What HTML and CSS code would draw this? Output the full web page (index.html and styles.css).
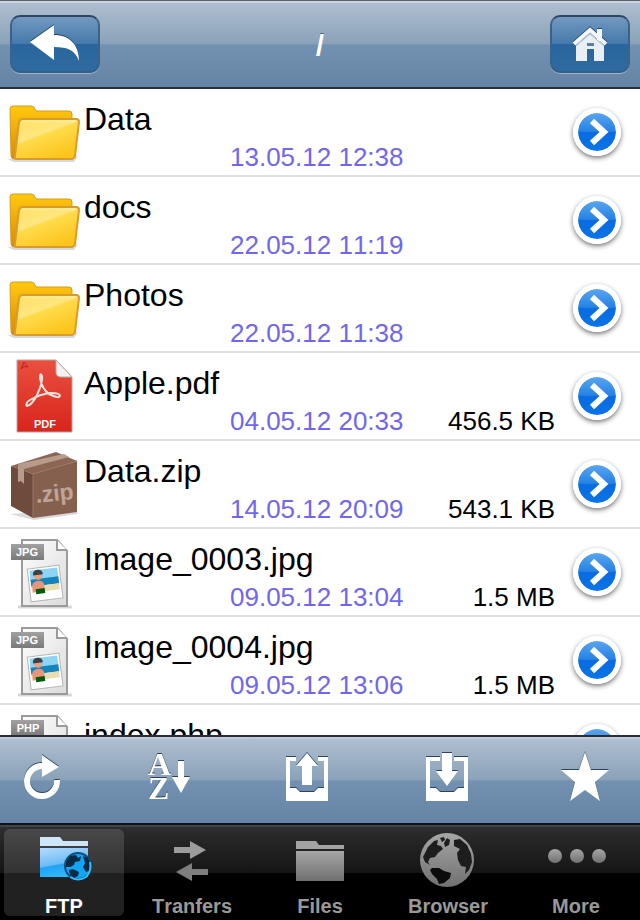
FILE: index.html
```html
<!DOCTYPE html>
<html lang="en">
<head>
    <meta charset="UTF-8">
    <meta name="viewport" content="width=device-width, initial-scale=1.0">
    <title>FTP</title>
    <link rel="stylesheet" href="styles.css">
</head>
<body>
    <svg class="sprite" aria-hidden="true">
        <defs>
            <linearGradient id="folderBack" x1="0" y1="0" x2="0" y2="1">
                <stop offset="0" stop-color="#ffc90e"/>
                <stop offset="1" stop-color="#d98a08"/>
            </linearGradient>
            <linearGradient id="folderFront" x1="0" y1="0" x2="0.6" y2="1">
                <stop offset="0" stop-color="#ffdf62"/>
                <stop offset="0.45" stop-color="#ffe680"/>
                <stop offset="0.5" stop-color="#ffdb4a"/>
                <stop offset="1" stop-color="#fdc51c"/>
            </linearGradient>
            <linearGradient id="pdfRed" x1="0" y1="0" x2="0" y2="1">
                <stop offset="0" stop-color="#e8503f"/>
                <stop offset="1" stop-color="#d9251c"/>
            </linearGradient>
            <linearGradient id="paper" x1="0" y1="0" x2="1" y2="1">
                <stop offset="0" stop-color="#fdfdfd"/>
                <stop offset="1" stop-color="#dcdcdc"/>
            </linearGradient>
            <linearGradient id="badge" x1="0" y1="0" x2="0" y2="1">
                <stop offset="0" stop-color="#a2a2a2"/>
                <stop offset="1" stop-color="#7a7a7a"/>
            </linearGradient>
            <linearGradient id="tabGray" x1="0" y1="0" x2="0" y2="1">
                <stop offset="0" stop-color="#a6a6a6"/>
                <stop offset="1" stop-color="#707070"/>
            </linearGradient>
            <linearGradient id="tabBlue" x1="0" y1="0" x2="0.3" y2="1">
                <stop offset="0" stop-color="#b4dcfb"/>
                <stop offset="0.6" stop-color="#6dbcf6"/>
                <stop offset="0.65" stop-color="#22a2f2"/>
                <stop offset="1" stop-color="#2cb8fb"/>
            </linearGradient>
        </defs>

        <symbol id="folder" viewBox="0 0 80 86">
            <path d="M7 70 L14 73 H74 L78 67 Z" fill="#000" opacity="0.15"/>
            <path d="M10 20 Q10 17 13 17 H31 Q34 17 35 20 L36 22 H69 Q72 22 72 25 V40 L68 70 H14 Q11 70 11 66 Z" fill="url(#folderBack)" stroke="#d99a1c"/>
            <path d="M23 30 H76 Q79 30 79 33 L75 67 Q74 70 71 70 H17 Q14 70 15 67 L19 33 Q20 30 23 30 Z" fill="url(#folderFront)" stroke="#dd9a26" stroke-width="2"/>
            <path d="M22 32 H76" stroke="#fff3b0" stroke-width="1"/>
        </symbol>

        <symbol id="page" viewBox="0 0 80 86">
            <path d="M18 78 H72" stroke="#000" stroke-width="3" opacity="0.15"/>
            <path d="M22 11 H57 L67 22 V77 H22 Z" fill="url(#paper)" stroke="#9b9b9b" stroke-width="2"/>
            <path d="M57 11 V21 H67" fill="#fff" stroke="#9b9b9b" stroke-width="2"/>
            <rect x="11" y="15" width="33" height="16" fill="url(#badge)"/>
        </symbol>

        <symbol id="photo" viewBox="0 0 80 86">
            <g transform="rotate(-7 45 54)">
                <rect x="29" y="38" width="32" height="33" fill="#fff" stroke="#b5b5b5"/>
                <rect x="31" y="40" width="28" height="11" fill="#8ed4f5"/>
                <rect x="31" y="49" width="28" height="7" fill="#1683bd"/>
                <rect x="31" y="56" width="28" height="6" fill="#e6ddb4"/>
                <path d="M32 62 V55 Q33 51 38 51 Q43 51 44 55 V62 Z" fill="#e8967a"/>
                <rect x="35" y="59" width="9" height="5" fill="#075a0c"/>
                <circle cx="39" cy="46" r="4" fill="#e8a184"/>
                <path d="M34 45 Q34 40 39 40 Q44 40 44 45 Z" fill="#3e4245"/>
            </g>
        </symbol>

        <symbol id="chevron" viewBox="0 0 38 38">
            <path d="M14 8 L26 19 L14 30" fill="none" stroke="#fff" stroke-width="6"/>
        </symbol>
    </svg>

    <header class="navbar">
        <button type="button" class="nav-btn back" aria-label="Back">
            <svg width="50" height="40" viewBox="0 0 50 40">
                <path d="M0 18 L24 1 V11 C40 11 49 21 49 37 C45 26 38 23 24 23 V36 Z" fill="#fff"/>
            </svg>
        </button>
        <h1>/</h1>
        <button type="button" class="nav-btn home" aria-label="Home">
            <svg width="36" height="36" viewBox="0 0 36 36">
                <path d="M4 19 L18 7 L32 19 V35 H22 V23 H15 V35 H4 Z" fill="#e9eff5"/>
                <rect x="25" y="3" width="5" height="12" fill="#f4f7fa"/>
                <path d="M2 18 L18 4 L34 18" fill="none" stroke="#f4f7fa" stroke-width="4"/>
                <path d="M4 20 L18 8 L32 20" fill="none" stroke="#a9bdd2" stroke-width="1"/>
                <rect x="15" y="17" width="7" height="3" fill="#5580ab"/>
            </svg>
        </button>
    </header>

    <main class="files">
        <ul>
            <li>
                <svg class="file-icon" viewBox="0 0 80 86"><use href="#folder"/></svg>
                <div class="file-info">
                    <div class="name">Data</div>
                    <div class="meta"><span class="date">13.05.12 12:38</span></div>
                </div>
                <button type="button" class="detail" aria-label="Data details"><svg><use href="#chevron"/></svg></button>
            </li>
            <li>
                <svg class="file-icon" viewBox="0 0 80 86"><use href="#folder"/></svg>
                <div class="file-info">
                    <div class="name">docs</div>
                    <div class="meta"><span class="date">22.05.12 11:19</span></div>
                </div>
                <button type="button" class="detail" aria-label="docs details"><svg><use href="#chevron"/></svg></button>
            </li>
            <li>
                <svg class="file-icon" viewBox="0 0 80 86"><use href="#folder"/></svg>
                <div class="file-info">
                    <div class="name">Photos</div>
                    <div class="meta"><span class="date">22.05.12 11:38</span></div>
                </div>
                <button type="button" class="detail" aria-label="Photos details"><svg><use href="#chevron"/></svg></button>
            </li>
            <li>
                <svg class="file-icon" viewBox="0 0 80 86">
                    <path d="M17 7 H56 L72 24 V79 H17 Z" fill="url(#pdfRed)" stroke="#b9a5a2"/>
                    <path d="M56 7 L72 24 H61 Q56 24 56 19 Z" fill="#f4f1f0" stroke="#b8aaa8"/>
                    <path d="M21 16 L24 9 L28 14 Q24 12 21 16" fill="none" stroke="#b81f17"/>
                    <path d="M27 53 Q32 52 37 42 Q43 29 42 23 Q40 19 40 25 Q42 36 49 41 Q59 46 60 43 Q60 40 51 40 Q40 41 30 47 Q25 50 27 53 Z" fill="none" stroke="#ffe1dc" stroke-width="2"/>
                    <text x="45" y="75" text-anchor="middle" font-size="11" font-weight="bold" fill="#fff">PDF</text>
                </svg>
                <div class="file-info">
                    <div class="name">Apple.pdf</div>
                    <div class="meta"><span class="date">04.05.12 20:33</span><span>456.5 KB</span></div>
                </div>
                <button type="button" class="detail" aria-label="Apple.pdf details"><svg><use href="#chevron"/></svg></button>
            </li>
            <li>
                <svg class="file-icon" viewBox="0 0 80 86">
                    <path d="M10 73 L34 79 L78 73 L76 69 Z" fill="#000" opacity="0.15"/>
                    <path d="M11 25 L56 11 L77 20 L33 33 Z" fill="#8c6553"/>
                    <path d="M11 25 L33 33 V77 L11 65 Z" fill="#6f4b3d"/>
                    <path d="M33 33 L77 20 V71 L33 77 Z" fill="#85604f"/>
                    <path d="M18 23 L64 13 L69 16 L24 28 Z" fill="#b79c8e"/>
                    <path d="M18 23 L24 28 V43 L21 40 L18 41 Z" fill="#b79c8e"/>
                    <path d="M33 33 V77 M33 33 L77 20" stroke="#9b7766" fill="none"/>
                    <text x="55" y="60" text-anchor="middle" font-size="23" font-weight="bold" fill="#bfa597" transform="rotate(-6 55 58)">.zip</text>
                </svg>
                <div class="file-info">
                    <div class="name">Data.zip</div>
                    <div class="meta"><span class="date">14.05.12 20:09</span><span>543.1 KB</span></div>
                </div>
                <button type="button" class="detail" aria-label="Data.zip details"><svg><use href="#chevron"/></svg></button>
            </li>
            <li>
                <svg class="file-icon" viewBox="0 0 80 86">
                    <use href="#page"/>
                    <use href="#photo"/>
                    <text x="27" y="27" text-anchor="middle" font-size="11" font-weight="bold" fill="#fff">JPG</text>
                </svg>
                <div class="file-info">
                    <div class="name">Image_0003.jpg</div>
                    <div class="meta"><span class="date">09.05.12 13:04</span><span>1.5 MB</span></div>
                </div>
                <button type="button" class="detail" aria-label="Image_0003.jpg details"><svg><use href="#chevron"/></svg></button>
            </li>
            <li>
                <svg class="file-icon" viewBox="0 0 80 86">
                    <use href="#page"/>
                    <use href="#photo"/>
                    <text x="27" y="27" text-anchor="middle" font-size="11" font-weight="bold" fill="#fff">JPG</text>
                </svg>
                <div class="file-info">
                    <div class="name">Image_0004.jpg</div>
                    <div class="meta"><span class="date">09.05.12 13:06</span><span>1.5 MB</span></div>
                </div>
                <button type="button" class="detail" aria-label="Image_0004.jpg details"><svg><use href="#chevron"/></svg></button>
            </li>
            <li>
                <svg class="file-icon" viewBox="0 0 80 86">
                    <use href="#page"/>
                    <text x="28" y="27" text-anchor="middle" font-size="11" font-weight="bold" fill="#fff">PHP</text>
                </svg>
                <div class="file-info">
                    <div class="name">index.php</div>
                </div>
                <button type="button" class="detail" aria-label="index.php details"><svg><use href="#chevron"/></svg></button>
            </li>
        </ul>
    </main>

    <div class="toolbar">
        <button type="button" aria-label="Refresh">
            <svg width="36" height="50" viewBox="0 0 36 50">
                <path d="M18 15 A15 15 0 1 0 33 29" fill="none" stroke="#fff" stroke-width="6"/>
                <path d="M18 4 L35 16 L18 26 Z" fill="#fff"/>
            </svg>
        </button>
        <button type="button" aria-label="Sort">
            <svg width="42" height="50" viewBox="0 0 42 50">
                <text class="serif" x="0" y="24" font-size="32" font-weight="bold" fill="#fff">A</text>
                <text class="serif" x="0" y="48" font-size="32" font-weight="bold" fill="#fff">Z</text>
                <path d="M30 10 H36 V26 H42 L33 42 L24 26 H30 Z" fill="#fff"/>
            </svg>
        </button>
        <button type="button" aria-label="Upload">
            <svg width="42" height="50" viewBox="0 0 42 50">
                <path d="M0 6 H10 V10 H4 V37 H10 L14 41 H28 L32 37 H38 V10 H32 V6 H42 V50 H0 Z" fill="#fff"/>
                <path d="M21 2 L32 15 H26 V34 H16 V15 H10 Z" fill="#fff"/>
            </svg>
        </button>
        <button type="button" aria-label="Download">
            <svg width="42" height="50" viewBox="0 0 42 50">
                <path d="M0 6 H14 V10 H4 V37 H10 L14 41 H28 L32 37 H38 V10 H28 V6 H42 V50 H0 Z" fill="#fff"/>
                <path d="M16 2 H26 V20 H32 L21 35 L10 20 H16 Z" fill="#fff"/>
            </svg>
        </button>
        <button type="button" aria-label="Favorites">
            <svg width="50" height="50" viewBox="0 0 50 50">
                <path d="M25 1 L31 19 H49 L35 31 L40 50 L25 39 L10 50 L15 31 L1 19 H19 Z" fill="#fff"/>
            </svg>
        </button>
    </div>

    <nav class="tabbar">
        <a href="#" class="tab active">
            <svg viewBox="0 0 64 67">
                <path d="M8 8 H28 L31 12 H56 V17 H8 Z" fill="#cfe5f8"/>
                <rect x="8" y="19" width="48" height="29" fill="url(#tabBlue)"/>
                <circle cx="46" cy="37" r="13" fill="#12a5f6" stroke="#0c4e7c" stroke-width="2"/>
                <path d="M34 33 L38 27 L44 26 L46 29 L49 27 L48 32 L43 33 L42 36 L38 38 L34 38 Z" fill="#082a44"/>
                <path d="M37 41 L41 40 L47 43 L46 47 L42 49 L38 46 Z" fill="#082a44"/>
                <path d="M51 27 L56 29 L59 36 L57 42 L54 43 L51 38 L53 34 Z" fill="#082a44"/>
                <path d="M38 48 Q46 53 54 48 Q60 42 58 33" fill="none" stroke="#2cc0ff" stroke-width="2"/>
            </svg>
            <span>FTP</span>
        </a>
        <a href="#" class="tab">
            <svg viewBox="0 0 64 67">
                <path d="M14 18 H30 V12 L46 21 L30 30 V24 H14 Z" fill="#9c9c9c"/>
                <path d="M48 40 H32 V34 L16 43 L32 52 V46 H48 Z" fill="#7e7e7e"/>
            </svg>
            <span>Tranfers</span>
        </a>
        <a href="#" class="tab">
            <svg viewBox="0 0 64 67">
                <path d="M8 12 H28 L31 16 H56 V20 H8 Z" fill="#a3a3a3"/>
                <rect x="8" y="22" width="48" height="30" fill="url(#tabGray)"/>
            </svg>
            <span>Files</span>
        </a>
        <a href="#" class="tab">
            <svg viewBox="0 0 64 67">
                <circle cx="31" cy="31" r="27" fill="url(#tabGray)"/>
                <path d="M9 24 L12 18 L18 12 L22 11 L21 16 L25 17 L27 20 L22 24 L19 28 L14 29 L12 33 L14 36 L9 33 L7 28 Z" fill="#1d1d1d"/>
                <path d="M16 39 L23 39 L28 42 L35 44 L34 49 L28 54 L23 55 L21 50 L16 45 L14 41 Z" fill="#0b0b0b"/>
                <path d="M38 11 L44 10 L51 16 L55 25 L56 33 L53 41 L49 45 L50 38 L45 37 L42 31 L41 24 L44 20 L38 17 Z" fill="#1d1d1d"/>
                <path d="M24 9 L28 8 L29 11 L26 13 Z M31 9 L34 11 L33 16 L29 18 L28 14 Z" fill="#1d1d1d"/>
            </svg>
            <span>Browser</span>
        </a>
        <a href="#" class="tab">
            <svg viewBox="0 0 64 67">
                <circle cx="11" cy="27" r="7" fill="url(#tabGray)"/>
                <circle cx="33" cy="27" r="7" fill="url(#tabGray)"/>
                <circle cx="55" cy="27" r="7" fill="url(#tabGray)"/>
            </svg>
            <span>More</span>
        </a>
    </nav>
</body>
</html>
```
FILE: styles.css
```css
* {
    box-sizing: border-box;
}
body {
    font-family: "Liberation Sans", Arial, Helvetica, sans-serif;
    font-kerning: none;
    background-color: #fff;
    color: #000;
    display: flex;
    flex-direction: column;
    height: 100vh;
    margin: 0;
}
button {
    padding: 0;
    border: none;
    background: none;
    cursor: pointer;
}
svg {
    display: block;
}
.sprite {
    position: absolute;
    width: 0;
    height: 0;
}
.serif {
    font-family: "Liberation Serif", "Times New Roman", serif;
}

/* top bar */
.navbar {
    display: grid;
    grid-template-columns: 1fr auto 1fr;
    align-items: center;
    flex-shrink: 0;
    height: 89px;
    padding: 0 10px;
    border-top: 1px solid #5b6169;
    border-bottom: 2px solid #25303f;
    background: linear-gradient(#b0bfd0, #8aa2b9 50%, #7391b1 51%, #6584a5);
    box-shadow: inset 0 2px 0 #c9d3df;
}
.navbar h1 {
    margin: 0;
    padding-top: 4px;
    font-size: 30px;
    line-height: 32px;
    color: #fff;
    text-shadow: 0 -1px 0 #4f657d;
}
.nav-btn {
    display: flex;
    justify-content: center;
    align-items: center;
    height: 58px;
    border: 2px solid #2f4f70;
    border-color: #2b4764 #3b6288 #32608d;
    border-radius: 10px;
    background: linear-gradient(#7398c0, #447aab 50%, #29669d 51%, #2f6ba1);
    box-shadow: 0 1px 0 #9db4ca;
}
.back {
    width: 90px;
}
.home {
    width: 80px;
    justify-self: end;
}
.nav-btn svg {
    filter: drop-shadow(0 -1px 0 #24425f);
}

/* file list */
.files {
    flex: 1;
    min-height: 0;
    overflow: hidden;
}
.files ul {
    list-style: none;
    margin: 0;
    padding: 0;
}
.files li {
    display: flex;
    align-items: center;
    height: 88px;
    padding-right: 19px;
    border-bottom: 2px solid #e0e0e0;
}
.file-icon {
    width: 80px;
    height: 86px;
    flex-shrink: 0;
}
.file-info {
    flex: 1;
    align-self: stretch;
    padding: 12px 18px 0 4px;
}
.name {
    font-size: 32px;
    line-height: 36px;
}
.meta {
    display: flex;
    justify-content: space-between;
    margin-top: 5px;
    padding-left: 146px;
    font-size: 26px;
    line-height: 30px;
}
.date {
    color: #6f67ee;
}
.detail {
    width: 48px;
    height: 48px;
    flex-shrink: 0;
    border: 5px solid #fff;
    border-radius: 50%;
    background: linear-gradient(#5aa6ee, #2482e6 48%, #0a6be0 52%, #0a74e8) padding-box;
    box-shadow: 0 2px 5px rgba(0, 0, 0, 0.55);
}
.detail svg {
    width: 38px;
    height: 38px;
}

/* actions */
.toolbar {
    display: grid;
    grid-template-columns: 84fr 170fr 106fr 174fr 102fr;
    place-items: center;
    flex-shrink: 0;
    height: 88px;
    padding: 0 4px 8px 0;
    border-top: 2px solid #2a2e33;
    background: linear-gradient(#b0bfd0, #8aa2b9 50%, #7391b1 51%, #6584a5);
    box-shadow: inset 0 2px 0 #c0cbd8;
}
.toolbar svg {
    overflow: visible;
    filter: drop-shadow(0 -1px 0 #2c4358);
}

/* tabs */
.tabbar {
    display: flex;
    flex-shrink: 0;
    height: 97px;
    padding: 4px 0;
    border-top: 2px solid #0d1520;
    background: linear-gradient(#2e2e2e, #151515 50%, #000 51%);
    box-shadow: inset 0 2px 0 #434343;
}
.tab {
    flex: 1;
    display: flex;
    flex-direction: column;
    align-items: center;
    margin: 0 4px;
    border-radius: 6px;
    color: #999;
    font-size: 20px;
    font-weight: bold;
    line-height: 20px;
    text-decoration: none;
}
.tab svg {
    width: 64px;
    height: 67px;
}
.active {
    background: linear-gradient(#484848, #333 50%, #212121 51%);
    color: #fff;
}
```
